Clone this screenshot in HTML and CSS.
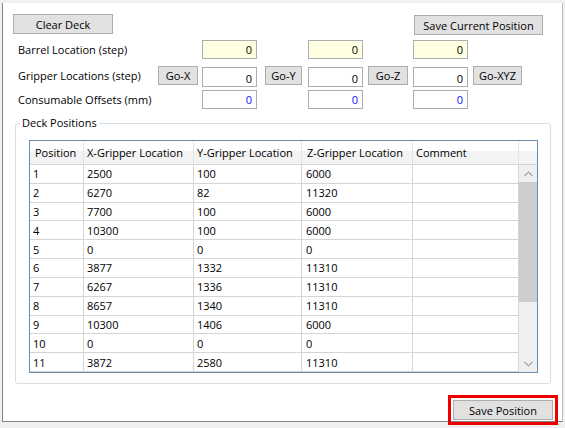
FILE: index.html
```html
<!DOCTYPE html>
<html>
<head>
<meta charset="utf-8">
<link rel="stylesheet" href="styles.css">
</head>
<body>
<div class="window">
  <div class="toolbar">
    <button class="btn btn-clear">Clear Deck</button>
    <button class="btn btn-save-current">Save Current Position</button>
  </div>
  <div class="form">
    <div class="lbl r1">Barrel Location (step)</div>
    <input class="num yellow r1 c3" value="0">
    <input class="num yellow r1 c5" value="0">
    <input class="num yellow r1 c7" value="0">

    <div class="lbl r2">Gripper Locations (step)</div>
    <button class="btn go r2 c2 w-x">Go-X</button>
    <input class="num grip r2 c3" value="0">
    <button class="btn go r2 c4 w-y">Go-Y</button>
    <input class="num grip r2 c5" value="0">
    <button class="btn go r2 c6 w-z">Go-Z</button>
    <input class="num grip r2 c7" value="0">
    <button class="btn go r2 c8 w-xyz">Go-XYZ</button>

    <div class="lbl r3">Consumable Offsets (mm)</div>
    <input class="num blue r3 c3" value="0">
    <input class="num blue r3 c5" value="0">
    <input class="num blue r3 c7" value="0">
  </div>

  <fieldset class="deck">
    <legend>Deck Positions</legend>
    <div class="datagrid">
      <div class="dg-head">
        <div class="hc hc-pos">Position</div>
        <div class="hc">X-Gripper Location</div>
        <div class="hc">Y-Gripper Location</div>
        <div class="hc hc-z">Z-Gripper Location</div>
        <div class="hc">Comment</div>
        <div class="hc hc-fill"></div>
      </div>
      <div class="dg-body">
        <div class="dg-rows">
          <div class="c">1</div><div class="c">2500</div><div class="c">100</div><div class="c cz">6000</div><div class="c"></div>
          <div class="c">2</div><div class="c">6270</div><div class="c">82</div><div class="c cz">11320</div><div class="c"></div>
          <div class="c">3</div><div class="c">7700</div><div class="c">100</div><div class="c cz">6000</div><div class="c"></div>
          <div class="c">4</div><div class="c">10300</div><div class="c">100</div><div class="c cz">6000</div><div class="c"></div>
          <div class="c">5</div><div class="c">0</div><div class="c">0</div><div class="c cz">0</div><div class="c"></div>
          <div class="c">6</div><div class="c">3877</div><div class="c">1332</div><div class="c cz">11310</div><div class="c"></div>
          <div class="c">7</div><div class="c">6267</div><div class="c">1336</div><div class="c cz">11310</div><div class="c"></div>
          <div class="c">8</div><div class="c">8657</div><div class="c">1340</div><div class="c cz">11310</div><div class="c"></div>
          <div class="c">9</div><div class="c">10300</div><div class="c">1406</div><div class="c cz">6000</div><div class="c"></div>
          <div class="c">10</div><div class="c">0</div><div class="c">0</div><div class="c cz">0</div><div class="c"></div>
          <div class="c">11</div><div class="c">3872</div><div class="c">2580</div><div class="c cz">11310</div><div class="c"></div>
        </div>
        <div class="vscroll">
          <div class="arrow">
            <svg width="9" height="6" viewBox="0 0 9 6"><polyline points="0.5,5 4.5,1 8.5,5" fill="none" stroke="#a3a3a3" stroke-width="1.2"/></svg>
          </div>
          <div class="track"><div class="thumb"></div></div>
          <div class="arrow">
            <svg width="9" height="6" viewBox="0 0 9 6"><polyline points="0.5,1 4.5,5 8.5,1" fill="none" stroke="#a3a3a3" stroke-width="1.2"/></svg>
          </div>
        </div>
      </div>
    </div>
  </fieldset>

  <div class="footer">
    <button class="btn btn-save">Save Position</button>
  </div>
</div>
</body>
</html>
```

FILE: styles.css
```css
* { box-sizing: border-box; }

html, body {
  margin: 0;
  padding: 0;
}

body {
  width: 565px;
  height: 428px;
  background: #f0f0f0;
  padding-top: 3px;
  font-family: "Open Sans", "Noto Sans", sans-serif;
  font-size: 11px;
  color: #000;
  overflow: hidden;
}

.window {
  margin-left: 2px;
  width: 561px;
  height: 419px;
  background: #fff;
  border-left: 1px solid #828282;
  border-right: 1px solid #bcbcbc;
  border-bottom: 1px solid #828282;
  padding-top: 11px;
}

.btn {
  font-family: inherit;
  font-size: 11px;
  color: #000;
  background: #e1e1e1;
  border: 1px solid #adadad;
  padding: 0;
  margin: 0;
  height: 20px;
  line-height: 17px;
  border-radius: 0;
}

.toolbar {
  display: flex;
  align-items: flex-start;
  height: 21px;
  padding: 0 19px 0 10px;
}

.btn-clear { width: 100px; }

.btn-save-current {
  width: 129px;
  margin-left: auto;
  margin-top: 1px;
}

.form {
  display: grid;
  margin: 5px 0 0 15px;
  grid-template-columns: 140px 44px 63px 43px 60px 45px 60px 49px;
  grid-template-rows: 26px 24px 19px;
  align-items: start;
}

.lbl {
  grid-column: 1;
  height: 19px;
  line-height: 19px;
  white-space: nowrap;
}

.r1 { grid-row: 1; }
.r2 { grid-row: 2; }
.r3 { grid-row: 3; }
.c2 { grid-column: 2; }
.c3 { grid-column: 3; }
.c4 { grid-column: 4; }
.c5 { grid-column: 5; }
.c6 { grid-column: 6; }
.c7 { grid-column: 7; }
.c8 { grid-column: 8; }

.num {
  width: 55px;
  height: 19px;
  border: 1px solid #abadb3;
  background: #fff;
  font-family: inherit;
  font-size: 11px;
  color: #000;
  text-align: right;
  padding: 0 4px 0 2px;
  margin: 0;
  outline: none;
}

.yellow { background: #ffffe1; }
.grip { margin-top: 1px; height: 20px; padding-top: 2px; }
.blue { color: #1010ff; }

.go { height: 19px; line-height: 16px; }
.w-x { width: 40px; }
.w-y { width: 37px; }
.w-z { width: 40px; }
.w-xyz { width: 49px; }

.deck {
  margin: 6px 11px 0 12px;
  padding: 0 0 10px 0;
  border: 1px solid #d5dfe5;
  border-radius: 3px;
  min-width: 0;
}

.deck legend {
  padding: 0 2px;
  margin-left: 4px;
  line-height: 16px;
  font-size: 11px;
}

.datagrid {
  margin: 9px 0 0 13px;
  width: 509px;
  height: 233px;
  border: 1px solid #688caf;
  display: flex;
  flex-direction: column;
}

.dg-head {
  display: grid;
  grid-template-columns: 54px 110px 108px 111px 106px 18px;
  height: 24px;
  background: linear-gradient(#ffffff 0, #ffffff 10px, #f3f3f3 10px, #f3f3f3 100%);
  border-bottom: 1px solid #d5d5d5;
}

.hc {
  display: flex;
  align-items: center;
  padding-left: 3px;
  border-right: 1px solid #e5e5e5;
  white-space: nowrap;
  overflow: hidden;
}

.hc-pos { padding-left: 5px; }
.hc-z { padding-left: 5px; }
.hc-fill { border-right: none; }

.dg-body {
  flex: 1;
  display: flex;
  min-height: 0;
}

.dg-rows {
  flex: 1;
  display: grid;
  grid-template-columns: 54px 110px 108px 111px 106px;
  grid-template-rows: repeat(11, 1fr);
}

.c {
  display: flex;
  align-items: center;
  padding-left: 3px;
  border-right: 1px solid #d5d5d5;
  border-bottom: 1px solid #d5d5d5;
  white-space: nowrap;
}

.cz { padding-left: 4px; }

.vscroll {
  width: 18px;
  background: #f0f0f0;
  display: flex;
  flex-direction: column;
}

.arrow {
  height: 17px;
  display: flex;
  align-items: center;
  justify-content: center;
}

.track {
  flex: 1;
}

.thumb {
  height: 120px;
  background: #cdcdcd;
}

.footer {
  display: flex;
  justify-content: flex-end;
  padding-right: 9px;
  margin-top: 16px;
}

.btn-save {
  width: 100px;
  height: 20px;
  outline: 3px solid #ee0000;
  outline-offset: 2px;
}
```
